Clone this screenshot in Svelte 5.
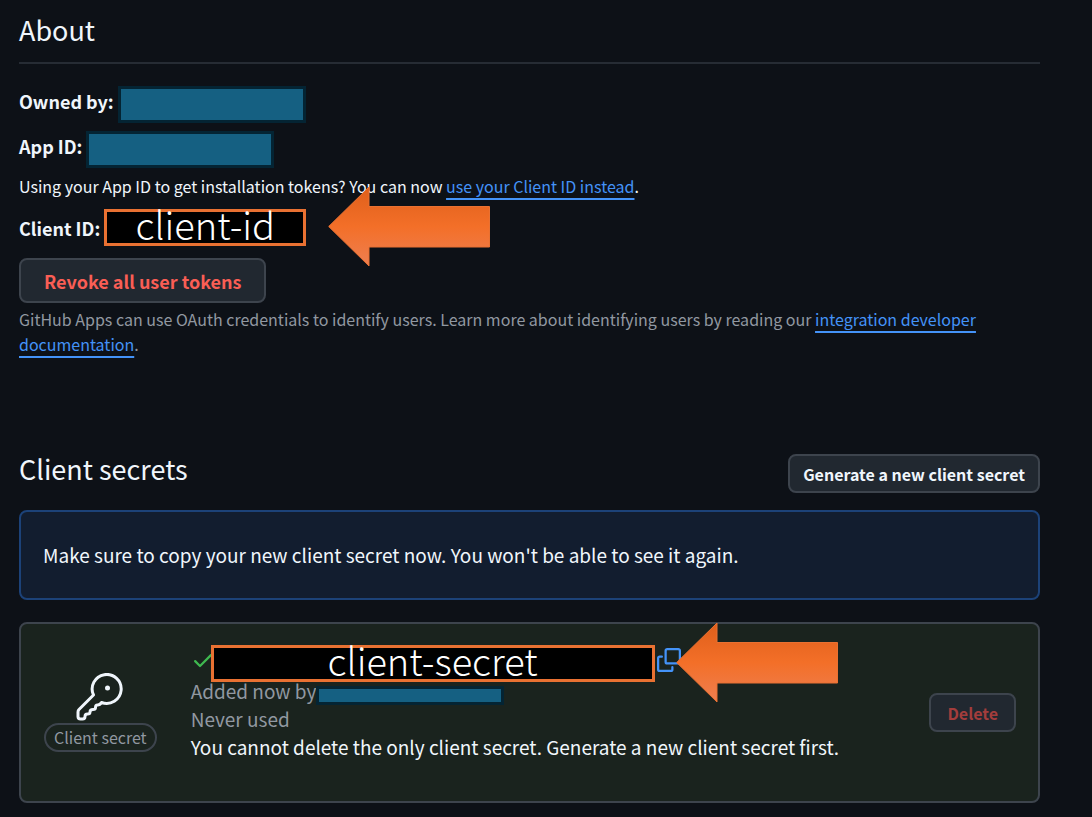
<script lang="ts">
  let copied = $state(false);
</script>

{#snippet arrow()}
  <svg class="arrow" viewBox="0 0 162 81" aria-hidden="true">
    <defs>
      <linearGradient id="arrow-fill" x1="0" y1="0" x2="0" y2="1">
        <stop offset="0" stop-color="#df5f1b" />
        <stop offset="0.5" stop-color="#f36f28" />
        <stop offset="1" stop-color="#ee7f51" />
      </linearGradient>
    </defs>
    <path d="M.7 40.500 41 1V20.500H161.500V61H41V80Z" fill="url(#arrow-fill)" stroke="#e97132" />
  </svg>
{/snippet}

<main>
  <h2 class="ruled">About</h2>

  <div class="row"><strong>Owned by:</strong><span class="redacted"></span></div>
  <div class="row"><strong>App ID:</strong><span class="redacted"></span></div>
  <p class="hint">
    Using your App ID to get installation tokens? You can now <a href="#client-id">use your Client ID instead</a>.
  </p>
  <div class="row client-id" id="client-id">
    <strong>Client ID:</strong><span class="mask">client-id</span>
    {@render arrow()}
  </div>

  <button class="btn revoke" type="button">Revoke all user tokens</button>
  <p class="note">
    GitHub Apps can use OAuth credentials to identify users. Learn more about identifying users by reading our
    <a href="#docs">integration developer documentation</a>.
  </p>

  <header class="secrets-head">
    <h2>Client secrets</h2>
    <button class="btn generate" type="button">Generate a new client secret</button>
  </header>

  <div class="flash">Make sure to copy your new client secret now. You won't be able to see it again.</div>

  <section class="secret">
    <div class="kind">
      <svg class="key" viewBox="0 0 48 48" aria-hidden="true">
        <path d="M17.500 22A14.500 14.500 0 1 1 25.500 29.500Q24 32 21.500 32Q19.500 32 19.500 34.500Q19.500 36.500 17 36.500Q14 36.500 14 39Q14 41 11.500 41Q9 41 9 43.500Q9 46 6.500 46H4.500Q2 46 2 43.500V39Q2 37.500 3 36.500Z" />
        <circle cx="31.500" cy="15" r="2.500" />
      </svg>
      <span class="label">Client secret</span>
    </div>
    <div class="details">
      <div class="value">
        <svg class="check" viewBox="0 0 16 16" aria-hidden="true">
          <path d="M13.780 4.220a.75.75 0 0 1 0 1.060l-7.250 7.250a.75.75 0 0 1-1.060 0L2.220 9.280a.75.75 0 0 1 1.060-1.060L6 10.940l6.720-6.720a.75.75 0 0 1 1.060 0Z" />
        </svg>
        <span class="mask wide">client-secret</span>
        <button class="copy" type="button" aria-label="Copy" aria-pressed={copied} onclick={() => (copied = true)}>
          <svg viewBox="0 0 16 16" aria-hidden="true">
            <path d="M0 6.750C0 5.784.784 5 1.750 5h1.500a.75.75 0 0 1 0 1.500h-1.500a.25.25 0 0 0-.25.25v7.500c0 .138.112.25.25.25h7.500a.25.25 0 0 0 .25-.25v-1.500a.75.75 0 0 1 1.500 0v1.500A1.750 1.750 0 0 1 9.250 16h-7.500A1.750 1.750 0 0 1 0 14.250Z" />
            <path d="M5 1.750C5 .784 5.784 0 6.750 0h7.500C15.216 0 16 .784 16 1.750v7.500A1.750 1.750 0 0 1 14.250 11h-7.500A1.750 1.750 0 0 1 5 9.250Zm1.750-.25a.25.25 0 0 0-.25.25v7.500c0 .138.112.25.25.25h7.500a.25.25 0 0 0 .25-.25v-7.500a.25.25 0 0 0-.25-.25Z" />
          </svg>
        </button>
        {@render arrow()}
      </div>
      <div class="muted">Added now by<span class="redacted thin"></span></div>
      <div class="muted">Never used</div>
      <div>You cannot delete the only client secret. Generate a new client secret first.</div>
    </div>
    <button class="btn delete" type="button" disabled>Delete</button>
  </section>
</main>

<style>
  :global(body) {
    background: #0d1117;
  }

  main {
    padding: 8px 52px 14px 19px;
    color: #f0f6fc;
    font-family: 'Noto Sans CJK JP', sans-serif;
    font-size: 19px;
    line-height: 28px;
  }

  h2,
  p {
    margin: 0;
  }

  h2 {
    font-size: 27px;
    font-weight: 400;
    line-height: 44px;
  }

  .ruled {
    padding-bottom: 10px;
    margin-bottom: 22px;
    border-bottom: 2px solid #262c34;
  }

  .row {
    position: relative;
    display: flex;
    gap: 4px;
    height: 37px;
    margin-bottom: 8px;
  }

  strong {
    font-size: 18px;
    font-weight: 700;
    line-height: 30px;
  }

  .redacted {
    box-sizing: border-box;
    width: 188px;
    height: 37px;
    border: 3px solid #042433;
    background: #156082;
  }

  .hint,
  .note {
    font-size: 16px;
    line-height: 25px;
  }

  .hint {
    margin-top: -2px;
  }

  a {
    color: #4493f8;
    text-decoration: underline 2px;
    text-underline-offset: 5px;
  }

  .client-id {
    align-items: center;
    margin: 10px 0 12px;
  }

  .mask {
    box-sizing: border-box;
    width: 202px;
    height: 37px;
    border: 3px solid #e97132;
    background: #000;
    color: #fff;
    font-size: 38px;
    font-weight: 300;
    line-height: 24px;
    text-align: center;
  }

  .arrow {
    position: absolute;
    top: -23px;
    left: 309px;
    width: 162px;
    height: 81px;
  }

  .btn {
    box-sizing: border-box;
    height: 39px;
    padding: 0 16px;
    border: 2px solid #3d444d;
    border-radius: 8px;
    background: #212830;
    color: #f0f6fc;
    font: 700 16px 'Noto Sans CJK JP', sans-serif;
  }

  .revoke {
    height: 45px;
    padding: 0 23px;
    color: #fa5e55;
    font-size: 18px;
  }

  .note {
    margin-top: 4px;
    color: #9198a1;
  }

  .secrets-head {
    display: flex;
    justify-content: space-between;
    height: 46px;
    margin: 90px 0 17px;
  }

  .generate {
    align-self: flex-end;
    padding: 0 13px;
  }

  .flash {
    padding: 29px 22px;
    border: 2px solid #1c4278;
    border-radius: 8px;
    background: #121d2f;
  }

  .secret {
    display: flex;
    align-items: center;
    margin-top: 22px;
    padding: 0 22px 0 23px;
    border: 2px solid #3d444d;
    border-radius: 8px;
    background: #1a231e;
  }

  .kind {
    display: flex;
    flex-direction: column;
    align-items: center;
    gap: 2px;
    margin-right: 34px;
  }

  .key {
    width: 48px;
    height: 48px;
  }

  .key path {
    fill: none;
    stroke: #f0f6fc;
    stroke-width: 3;
    stroke-linejoin: round;
  }

  .key circle {
    fill: #f0f6fc;
  }

  .label {
    padding: 0 8px;
    border: 2px solid #3d444d;
    border-radius: 16px;
    color: #9198a1;
    font-size: 16px;
    line-height: 25px;
  }

  .details {
    flex: 1;
    padding: 21px 0 40px;
  }

  .value {
    position: relative;
    display: flex;
    height: 32px;
  }

  .check {
    width: 24px;
    height: 24px;
    margin: 3px -4px 0 0;
    fill: #3fb950;
  }

  .wide {
    width: 444px;
  }

  .copy {
    width: 24px;
    height: 24px;
    margin: 3px 0 0 2px;
    padding: 0;
    border: 0;
    background: none;
  }

  .copy svg {
    display: block;
    fill: #4493f8;
  }

  .value .arrow {
    left: 485px;
  }

  .muted {
    display: flex;
    color: #9198a1;
  }

  .thin {
    align-self: flex-end;
    height: 19px;
  }

  .delete {
    color: #a33d3c;
  }
</style>
